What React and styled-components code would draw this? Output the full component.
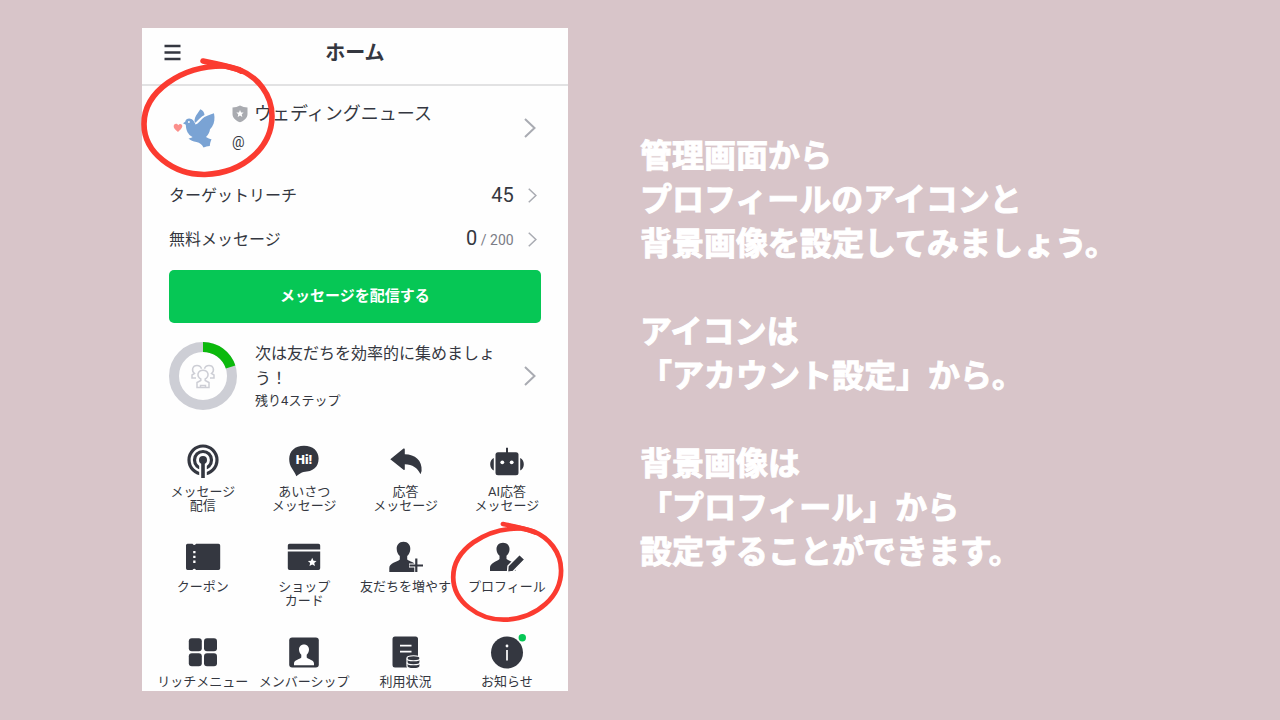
import styled, { createGlobalStyle } from "styled-components";

const App = () => {
  return (
    <Page>
      <GlobalStyle />
      <PhoneSide>
        <Phone>
          <Header>
            <MenuButton aria-label="メニュー">
              <MenuIcon />
            </MenuButton>
            <Title>ホーム</Title>
          </Header>
          <Content>
            <ProfileLink href="#account">
              <Avatar>
                <BirdIcon />
                <HandCircle $width={140} $left={-30} $top={-46} />
              </Avatar>
              <LinkBody>
                <AccountName>
                  <ShieldIcon />
                  ウェディングニュース
                </AccountName>
                <AccountId>@</AccountId>
              </LinkBody>
              <Chevron $large />
            </ProfileLink>

            <StatLink href="#reach">
              ターゲットリーチ
              <StatValue>45</StatValue>
              <Chevron />
            </StatLink>
            <StatLink href="#free">
              無料メッセージ
              <StatValue>
                0<small> / 200</small>
              </StatValue>
              <Chevron />
            </StatLink>

            <SendButton>メッセージを配信する</SendButton>

            <StepLink href="#steps">
              <ProgressRing />
              <LinkBody>
                <StepText>次は友だちを効率的に集めましょう！</StepText>
                <StepRest>残り4ステップ</StepRest>
              </LinkBody>
              <Chevron $large />
            </StepLink>
          </Content>

          <MenuGrid>
            {menuItems.map(({ label, Icon, circled }) => (
              <MenuLink href="#menu" key={label}>
                <IconBox>
                  <Icon />
                  {circled && <HandCircle $width={118} $left={-40} $top={-19} />}
                </IconBox>
                <MenuLabel>{label}</MenuLabel>
              </MenuLink>
            ))}
          </MenuGrid>
        </Phone>
      </PhoneSide>

      <Guide>
        <p>
          管理画面から
          <br />
          プロフィールのアイコンと
          <br />
          背景画像を設定してみましょう。
        </p>
        <p>
          アイコンは
          <br />
          「アカウント設定」から。
        </p>
        <p>
          背景画像は
          <br />
          「プロフィール」から
          <br />
          設定することができます。
        </p>
      </Guide>
    </Page>
  );
};

export default App;

const MenuIcon = () => (
  <svg width="18" height="18" viewBox="0 0 18 18" fill="none" stroke="#343740" strokeWidth="2.400">
    <path d="M0.500 2H16.500M0.500 8.500H16.500M0.500 15H16.500" />
  </svg>
);

const ChevronIcon = ({ className }) => (
  <svg className={className} viewBox="0 0 12 20" fill="none" stroke="#a9abb2" strokeWidth="2">
    <path d="M1 1L10.500 10L1 19" />
  </svg>
);

const BirdIcon = () => (
  <svg width="54" height="54" viewBox="0 0 54 54">
    <path
      d="M9 31C6 28.500 4.300 27 4.700 24.800C5.200 22.300 8 22 9.200 24.200C10.600 22.300 13.600 23 13.300 25.600C13 27.500 11 29 9 31Z"
      fill="#fb8f8b"
    />
    <path
      d="M14 22.300L16.200 20.800C16.600 18.800 18.300 17.600 20.200 17.600C23.300 17.700 25.300 20.300 26.500 23.600C29 22.800 31 20.300 33 18C36 15 40 14.300 45 12.300C46 17.500 45.500 22 43.200 25.500C42.300 27 41.300 28 41 28.300C40.800 31 39.300 34 37 36C38.700 37.300 41 38 42.500 38.200C41.500 40.500 41 42.500 40.800 45C38 45 36.800 46 34.500 46.500C33 43.500 31 42 27.500 41C24 40.500 21.500 39.500 19.500 37.500C21.500 37 23 36.500 23.500 36C19 33.500 17 29.500 16.800 23.700Z"
      fill="#7aa3d4"
    />
    <path
      d="M25.500 20.500C25.500 15.500 28.700 12.500 31.300 8.300C34 9.300 35.200 11.200 35.500 14C31.800 15.500 29.500 19 26.500 21.800Z"
      fill="#7aa3d4"
    />
    <circle cx="19.900" cy="21" r="0.900" fill="#ffffff" />
  </svg>
);

const ShieldIcon = () => (
  <svg width="16" height="18" viewBox="0 0 16 18">
    <path d="M0.500 2.500Q4.500 2.500 8 0.500Q11.500 2.500 15.500 2.500V9C15.500 13 12 15.700 8 17.300C4 15.700 0.500 13 0.500 9Z" fill="#a9abb0" />
    <path d={STAR} transform="translate(8 8.800) scale(3.800)" fill="#ffffff" />
  </svg>
);

const ProgressRing = () => (
  <svg width="68" height="70" viewBox="0 0 68 70" fill="none">
    <circle cx="34" cy="35" r="29" stroke="#cdced5" strokeWidth="10" />
    <circle
      cx="34"
      cy="35"
      r="29"
      stroke="#0bb90c"
      strokeWidth="10"
      pathLength="100"
      strokeDasharray="20 80"
      transform="rotate(-90 34 35)"
    />
    <g stroke="#cdced5" strokeWidth="1.500">
      <path d="M27 37H23V34L25.500 32.500C22 29.500 23.500 24.500 28 24.500C30.500 24.500 32 25.800 32.500 27.800M41 37H45V34L42.500 32.500C46 29.500 44.500 24.500 40 24.500C37.500 24.500 36 25.800 35.500 27.800" />
      <path d="M31.800 38C27 35 28.700 29.300 34 29.300C39.300 29.300 41 35 36.200 38V39.500L40 41.500V46.500H28V41.500L31.800 39.500Z" />
      <path d="M31.500 46V44.500H36.500V46" />
    </g>
  </svg>
);

const CircleDrawing = ({ className }) => (
  <svg
    className={className}
    viewBox="140 54 140 126"
    fill="none"
    stroke="#fb3b30"
    strokeWidth="5.600"
    strokeLinecap="round"
    strokeLinejoin="round"
  >
    <path d="M224 65C183 65 145 90 145 123C145 152 175 174 206 173.500C246 172 273 145 273 115C273 93 258 76 241 69C229 65 214 62 204 60" />
    <path d="M212 62.500C224 65 235 66 242 70" />
  </svg>
);

const STAR =
  "M0 -1L0.290 -0.370L0.960 -0.310L0.460 0.140L0.600 0.810L0 0.470L-0.600 0.810L-0.460 0.140L-0.960 -0.310L-0.290 -0.370Z";

const BroadcastIcon = () => (
  <IconSvg>
    <g fill="none" stroke="#343740" strokeWidth="3.200">
      <circle cx="18" cy="17" r="14" />
      <circle cx="18" cy="17" r="8.500" />
    </g>
    <path d="M14.200 18H21.800V34H14.200Z" fill="#ffffff" />
    <circle cx="18" cy="17" r="4" />
    <path d="M16.200 17H19.800V35H16.200Z" />
  </IconSvg>
);

const GreetingIcon = () => (
  <IconSvg>
    <path d="M18 2.700C27 2.700 32.600 8 32.600 15.500C32.600 24 27 28.700 17.500 28.900C15.500 29 13 31 10.300 33.300C9.600 31 8 28.500 6 25.500C4 22.500 3.200 19.500 3.200 16C3.200 8 9 2.700 18 2.700Z" />
    <HiText x="18" y="21" textAnchor="middle">
      Hi!
    </HiText>
  </IconSvg>
);

const ReplyIcon = () => (
  <IconSvg>
    <path d="M2.300 16.200L15.500 5.600Q16.800 5 16.800 6.500V11.300C27 11.500 34.500 17.500 33.600 28L32.500 31.300C29.500 25 24.500 21.500 16.800 21.300V26Q16.800 27.500 15.500 26.700Z" />
  </IconSvg>
);

const RobotIcon = () => (
  <IconSvg>
    <rect x="6.500" y="9.300" width="23" height="23" rx="2.500" />
    <path d="M17 4.700H19V10H17ZM4.800 15V27.500C0 25.500 0 17 4.800 15ZM31.200 15V27.500C36 25.500 36 17 31.200 15Z" />
    <circle cx="13.300" cy="19.300" r="1.900" fill="#ffffff" />
    <circle cx="22.700" cy="19.300" r="1.900" fill="#ffffff" />
  </IconSvg>
);

const CouponIcon = () => (
  <IconSvg>
    <path d="M2.500 5.700H7.500Q9.300 8.500 11 5.700H33.500Q35.200 5.700 35.200 7.500V30.300Q35.200 32 33.500 32H11Q9.300 29.300 7.500 32H2.500Q1 32 1 30.300V7.500Q1 5.700 2.500 5.700Z" />
    <path d="M8.200 13H10.500V15.300H8.200ZM8.200 17.800H10.500V20.100H8.200ZM8.200 22.600H10.500V24.900H8.200Z" fill="#ffffff" />
  </IconSvg>
);

const ShopCardIcon = () => (
  <IconSvg>
    <path d="M3.500 5.700H32.500Q34.200 5.700 34.200 7.500V11.500H1.800V7.500Q1.800 5.700 3.500 5.700ZM1.800 13.500H34.200V30.300Q34.200 32 32.500 32H3.500Q1.800 32 1.800 30.300Z" />
    <path d={STAR} transform="translate(26.200 24.300) scale(4.500)" fill="#ffffff" />
  </IconSvg>
);

const AddFriendIcon = () => (
  <IconSvg>
    <path d="M15.500 3.700C20 3.700 22.500 7 22.300 11C22.200 14 21 16.500 19.200 18V21.500C21.500 23.500 27 24 28.300 28V34H1.300V30C1.300 25 9 24 11.800 21.500V18C10 16.500 8.800 14 8.700 11C8.500 7 11 3.700 15.500 3.700Z" />
    <path d="M28.300 19.500V34M21 27.500H36" stroke="#ffffff" strokeWidth="4" />
    <path d="M28.300 20.500V34M21.500 27.500H35" stroke="#343740" strokeWidth="2.200" />
  </IconSvg>
);

const ProfileIcon = () => (
  <IconSvg>
    <path d="M14 4.700C18.300 4.700 20.700 7.800 20.500 11.500C20.400 14 19.300 16.300 17.500 17.800V21C19.800 23 25 24 26.500 27V33H1V29.500C1 25 8 23.500 10.500 21V17.800C8.700 16.300 7.600 14 7.500 11.500C7.300 7.800 9.700 4.700 14 4.700Z" />
    <path
      d="M19 28L30.500 16.500L35.800 21.500L24 33.500L18.500 34.200Z"
      stroke="#ffffff"
      strokeWidth="1.400"
    />
  </IconSvg>
);

const RichMenuIcon = () => (
  <IconSvg>
    <rect x="3.800" y="5.300" width="13" height="13" rx="3" />
    <rect x="19" y="5.300" width="13" height="13" rx="3" />
    <rect x="3.800" y="20.300" width="13" height="13" rx="3" />
    <rect x="19" y="20.300" width="13" height="13" rx="3" />
  </IconSvg>
);

const MembershipIcon = () => (
  <IconSvg>
    <rect x="3.200" y="4.500" width="29.600" height="30" rx="3" />
    <path
      d="M18 11.500C21 11.500 23 13.800 23 16.500C23 18.700 22 20.500 20.700 21.700V24.500C22.500 26.500 28 27 28 30.500V32.300H8V30.500C8 27 13.500 26.500 15.300 24.500V21.700C14 20.500 13 18.700 13 16.500C13 13.800 15 11.500 18 11.500Z"
      fill="#ffffff"
    />
  </IconSvg>
);

const UsageIcon = () => (
  <IconSvg>
    <rect x="4.500" y="3.500" width="25.500" height="31" rx="2.500" />
    <path d="M12 12.700H23.500M12 18.700H23.500" stroke="#ffffff" strokeWidth="1.700" />
    <g stroke="#ffffff" strokeWidth="1.200">
      <path d="M19 25C19 22 32 22 32 25V33C32 36.500 19 36.500 19 33Z" />
      <path d="M19 25.500C19 28.500 32 28.500 32 25.500M19 29.500C19 32.500 32 32.500 32 29.500" fill="none" />
    </g>
  </IconSvg>
);

const InfoIcon = () => (
  <IconSvg>
    <circle cx="18" cy="19.500" r="16" />
    <circle cx="18" cy="13" r="1.400" fill="#ffffff" />
    <path d="M18 17V27.500" stroke="#ffffff" strokeWidth="1.700" />
    <circle cx="33.300" cy="4.800" r="3.700" fill="#06c755" />
  </IconSvg>
);

const menuItems = [
  { label: "メッセージ\n配信", Icon: BroadcastIcon },
  { label: "あいさつ\nメッセージ", Icon: GreetingIcon },
  { label: "応答\nメッセージ", Icon: ReplyIcon },
  { label: "AI応答\nメッセージ", Icon: RobotIcon },
  { label: "クーポン", Icon: CouponIcon },
  { label: "ショップ\nカード", Icon: ShopCardIcon },
  { label: "友だちを増やす", Icon: AddFriendIcon },
  { label: "プロフィール", Icon: ProfileIcon, circled: true },
  { label: "リッチメニュー", Icon: RichMenuIcon },
  { label: "メンバーシップ", Icon: MembershipIcon },
  { label: "利用状況", Icon: UsageIcon },
  { label: "お知らせ", Icon: InfoIcon },
];

const GlobalStyle = createGlobalStyle`
  * {
    box-sizing: border-box;
  }

  body {
    margin: 0;
    background: #d8c5c9;
    color: #343740;
    font-family: Roboto, "Noto Sans CJK JP", sans-serif;
  }

  a {
    color: inherit;
    text-decoration: none;
  }

  svg {
    display: block;
    flex-shrink: 0;
    overflow: visible;
  }
`;

const Page = styled.div`
  display: grid;
  grid-template-columns: 1fr 1fr;
  align-items: start;
  min-height: 100vh;
  padding: 28px 0;
`;

const PhoneSide = styled.div`
  padding: 0 11.3% 0 22.2%;
`;

const Phone = styled.main`
  background: #fefefe;
`;

const Header = styled.header`
  display: grid;
  grid-template-columns: 18px 1fr 18px;
  align-items: center;
  height: 58px;
  padding: 0 22px 6px;
  border-bottom: 2px solid #e2e2e3;
`;

const MenuButton = styled.button`
  padding: 0;
  border: none;
  background: none;
  cursor: pointer;
`;

const Title = styled.h1`
  margin: 0;
  font-size: 20px;
  line-height: 28px;
  text-align: center;
`;

const Content = styled.div`
  padding: 14px 27px 0;
`;

const ProfileLink = styled.a`
  display: flex;
  align-items: center;
  gap: 9px;
  padding: 0 5px 18px 0;
`;

const Avatar = styled.div`
  position: relative;
`;

const HandCircle = styled(CircleDrawing)`
  position: absolute;
  z-index: 1;
  left: ${({ $left }) => $left}px;
  top: ${({ $top }) => $top}px;
  width: ${({ $width }) => $width}px;
  pointer-events: none;
`;

const LinkBody = styled.div`
  flex: 1;
`;

const AccountName = styled.div`
  display: flex;
  align-items: center;
  gap: 6px;
  font-size: 18px;
  line-height: 28px;
`;

const AccountId = styled.div`
  font-size: 14px;
  line-height: 28px;
`;

const Chevron = styled(ChevronIcon)`
  width: ${({ $large }) => ($large ? 12 : 9)}px;
  height: ${({ $large }) => ($large ? 20 : 15)}px;
`;

const StatLink = styled.a`
  display: flex;
  align-items: center;
  gap: 14px;
  padding-right: 4px;
  font-size: 16px;
  line-height: 43px;
`;

const StatValue = styled.span`
  margin-left: auto;
  font-size: 20px;

  small {
    color: #7b7d86;
    font-size: 14px;
  }
`;

const SendButton = styled.button`
  display: block;
  width: 100%;
  margin: 8px 0 18px;
  padding: 15px;
  border: none;
  border-radius: 5px;
  background: #06c755;
  color: #ffffff;
  font-family: inherit;
  font-size: 15px;
  font-weight: 700;
  line-height: 23px;
  cursor: pointer;
`;

const StepLink = styled.a`
  display: flex;
  align-items: center;
  gap: 18px;
  padding-right: 5px;
`;

const StepText = styled.div`
  font-size: 16px;
  line-height: 25px;
`;

const StepRest = styled.div`
  font-size: 13px;
  line-height: 20px;
`;

const MenuGrid = styled.nav`
  display: grid;
  grid-template-columns: repeat(4, 1fr);
  row-gap: 25px;
  padding: 32px 10px 2px;
`;

const MenuLink = styled.a`
  display: flex;
  flex-direction: column;
  align-items: center;
  gap: 6px;
`;

const IconBox = styled.span`
  position: relative;
`;

const IconSvg = styled.svg.attrs({
  viewBox: "0 0 36 36",
})`
  width: 36px;
  height: 36px;
  fill: #343740;
`;

const HiText = styled.text`
  fill: #ffffff;
  font-size: 13px;
  font-weight: 900;
`;

const MenuLabel = styled.span`
  font-size: 13px;
  line-height: 14px;
  text-align: center;
  white-space: pre;
`;

const Guide = styled.section`
  align-self: center;
  padding-bottom: 12px;
  color: #ffffff;
  font-size: 32px;
  font-weight: 700;
  line-height: 44px;
  -webkit-text-stroke: 1px #ffffff;

  p {
    margin: 0 0 44px;
  }

  p:last-child {
    margin: 0;
  }
`;
